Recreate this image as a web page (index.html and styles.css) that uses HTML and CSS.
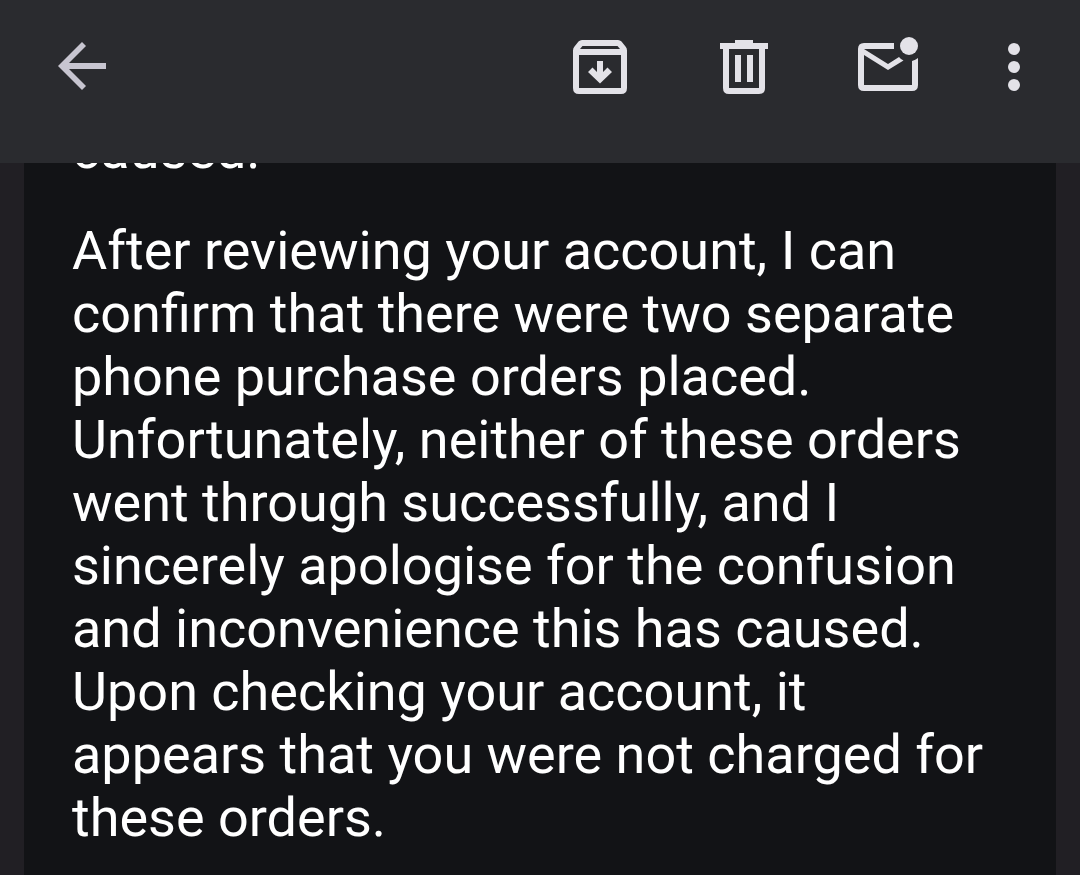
FILE: index.html
```html
<!DOCTYPE html>
<html lang="en">
<head>
<meta charset="utf-8">
<meta name="viewport" content="width=device-width, initial-scale=1">
<title>Message</title>
<link rel="stylesheet" href="styles.css">
</head>
<body>
<header class="toolbar">
  <button class="icon-button back" type="button" aria-label="Back">
    <svg class="icon" viewBox="0 0 72 72" aria-hidden="true"><path d="M36 11 12 35 36 59 40 55 23 38H60V32H23L40 15Z"/></svg>
  </button>
  <div class="actions">
    <button class="icon-button" type="button" aria-label="Archive">
      <svg class="icon" viewBox="0 0 72 72" aria-hidden="true"><path fill-rule="evenodd" d="M18 9H54Q56 9 57.500 10.500L61.500 15.500Q63 17 63 19.500V57Q63 63 57 63H15Q9 63 9 57V19.500Q9 17 10.500 15.500L14.500 10.500Q16 9 18 9ZM18.500 15 16 18H56L53.500 15ZM15 24V57H57V24Z"/><path d="M33 30H39V41L43.500 36.500 48 41 36 52.500 24 41 28.500 36.500 33 41Z"/></svg>
    </button>
    <button class="icon-button" type="button" aria-label="Delete">
      <svg class="icon" viewBox="0 0 72 72" aria-hidden="true"><path fill-rule="evenodd" d="M27 9H45V12H60V18H57V57Q57 63 51 63H21Q15 63 15 57V18H12V12H27ZM21 18V57H51V18ZM27 24H33V51H27ZM39 24H45V51H39Z"/></svg>
    </button>
    <button class="icon-button" type="button" aria-label="Mark as unread">
      <svg class="icon" viewBox="0 0 72 72" aria-hidden="true"><path d="M42 12H12Q6 12 6 18V54Q6 60 12 60H60Q66 60 66 54V27Q63.500 29 60 30V54H12V24L36 39 51.500 29.500Q49 28.500 47 26L36 33 12 18H42Z"/><circle cx="57" cy="15" r="9"/></svg>
    </button>
    <button class="icon-button more" type="button" aria-label="More options">
      <svg class="icon" viewBox="0 0 36 72" aria-hidden="true"><circle cx="18" cy="18" r="6"/><circle cx="18" cy="36" r="6"/><circle cx="18" cy="54" r="6"/></svg>
    </button>
  </div>
</header>
<main class="thread">
  <article class="message">
    <p class="paragraph">caused.</p>
    <p class="paragraph">After reviewing your account, I can confirm that there were two separate phone purchase orders placed. Unfortunately, neither of these orders went through successfully, and I sincerely apologise for the confusion and inconvenience this has caused. Upon checking your account, it appears that you were not charged for these orders.</p>
  </article>
</main>
</body>
</html>
```
FILE: styles.css
```css
* {
  box-sizing: border-box;
}

body {
  display: flex;
  flex-direction: column;
  height: 100vh;
  margin: 0;
  overflow: hidden;
  background: #211f24;
  color: #ffffff;
  font-family: Roboto, "Liberation Sans", sans-serif;
}

.toolbar {
  display: flex;
  flex: none;
  justify-content: space-between;
  padding: 31px 48px 60px 46px;
  background: #2a2b2f;
}

.actions {
  display: flex;
  gap: 72px;
}

.icon-button {
  width: 72px;
  height: 72px;
  padding: 0;
  border: 0;
  background: none;
  color: #e3e2e8;
}

.back {
  color: #c7c5d0;
}

.more {
  width: 36px;
}

.icon {
  display: block;
  width: 100%;
  height: 100%;
  fill: currentColor;
}

.thread {
  display: flex;
  flex: 1;
  flex-direction: column;
  min-height: 0;
  padding: 0 24px;
  overflow: hidden;
}

/* The thread is scrolled part of the way into the message. */
.message {
  flex: 1 0 auto;
  margin-top: -45px;
  padding: 0 48px;
  background: #121316;
}

.paragraph {
  margin: 0 0 38px;
  font-size: 54px;
  line-height: 63px;
}
```
